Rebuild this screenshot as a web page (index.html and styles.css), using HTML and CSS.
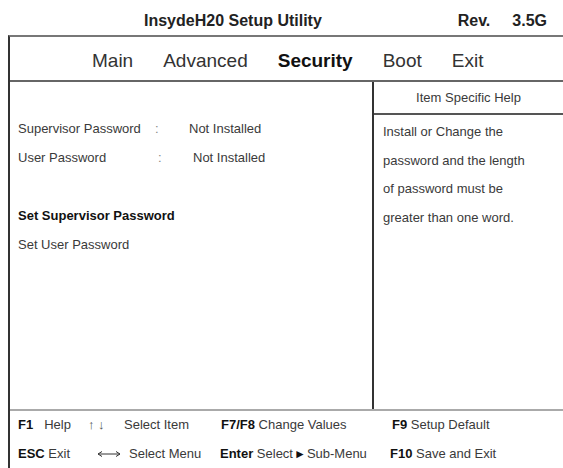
FILE: index.html
```html
<!DOCTYPE html>
<html lang="en">
<head>
    <meta charset="UTF-8">
    <meta name="viewport" content="width=device-width, initial-scale=1.0">
    <title>InsydeH20 Setup Utility</title>
    <link rel="stylesheet" href="styles.css">
</head>
<body>

    <div id="titleBar">
        <div class="title">InsydeH20 Setup Utility</div>
        <div class="rev"><span>Rev.</span><span>3.5G</span></div>
    </div>

    <div id="frame">
        <div class="nav">
            <span>Main</span>
            <span>Advanced</span>
            <span class="active">Security</span>
            <span>Boot</span>
            <span>Exit</span>
        </div>

        <div class="main">
            <div class="settings">
                <div class="row">
                    <span>Supervisor Password</span>
                    <span class="colon">:</span>
                    <span>Not Installed</span>
                </div>
                <div class="row shifted">
                    <span>User Password</span>
                    <span class="colon">:</span>
                    <span>Not Installed</span>
                </div>
                <div class="row blank"></div>
                <div class="item selected">Set Supervisor Password</div>
                <div class="item">Set User Password</div>
            </div>

            <div class="help">
                <div class="help-title">Item Specific Help</div>
                <div class="help-text">
                    <div>Install or Change the</div>
                    <div>password and the length</div>
                    <div>of password must be</div>
                    <div>greater than one word.</div>
                </div>
            </div>
        </div>

        <div class="footer">
            <div class="key"><b>F1</b><span class="pad">Help</span></div>
            <div class="key"><span class="arrows">&#8593; &#8595;</span><span>Select Item</span></div>
            <div class="key"><b>F7/F8</b> Change Values</div>
            <div class="key"><b>F9</b> Setup Default</div>

            <div class="key"><b>ESC</b> Exit</div>
            <div class="key menu">
                <svg class="lr" width="24" height="8" viewBox="0 0 24 8">
                    <path d="M1 4H23M1 4L5 1.5M1 4L5 6.5M23 4L19 1.5M23 4L19 6.5" stroke="#333" stroke-width="1" fill="none"/>
                </svg>
                <span>Select Menu</span>
            </div>
            <div class="key enter"><b>Enter</b> Select<span class="tri">&#9658;</span>Sub-Menu</div>
            <div class="key f10"><b>F10</b> Save and Exit</div>
        </div>
    </div>

</body>
</html>
```

FILE: styles.css
```css
body {
    font-family: 'Liberation Sans', Arial, sans-serif;
    background-color: #fff;
    color: #3a3a3a;
    margin: 0;
    padding: 0;
    width: 563px;
    height: 468px;
    overflow: hidden;
}
#titleBar {
    display: flex;
    align-items: center;
    height: 35px;
    padding-top: 6px;
    box-sizing: border-box;
    font-size: 16px;
    font-weight: bold;
    color: #222;
}
.title {
    margin-left: 144px;
}
.rev {
    margin-left: auto;
    margin-right: 16px;
    display: flex;
    gap: 22px;
}
#frame {
    margin-left: 8px;
    border-left: 2px solid #333;
    border-top: 2px solid #777;
    height: 433px;
}
.nav {
    display: flex;
    align-items: center;
    gap: 30px;
    height: 45px;
    padding-left: 82px;
    padding-top: 4px;
    box-sizing: border-box;
    border-bottom: 2px solid #666;
    font-size: 19px;
    color: #333;
}
.nav .active {
    font-weight: bold;
    color: #111;
}
.main {
    display: flex;
    height: 327px;
}
.settings {
    width: 362px;
    padding: 32px 0 0 8px;
    box-sizing: border-box;
    font-size: 13px;
    line-height: 29px;
}
.row {
    display: grid;
    grid-template-columns: 137px 34px auto;
    height: 29px;
}
.row.shifted {
    grid-template-columns: 140px 35px auto;
}
.colon {
    color: #888;
}
.item.selected {
    font-weight: bold;
    color: #111;
}
.help {
    flex: 1;
    border-left: 2px solid #333;
    font-size: 13px;
}
.help-title {
    height: 31px;
    line-height: 32px;
    text-align: center;
    border-bottom: 2px solid #555;
}
.help-text {
    padding: 3px 0 0 9px;
    line-height: 28.5px;
}
.footer {
    display: grid;
    grid-template-columns: 70px 133px 171px auto;
    grid-template-rows: 22px 22px;
    row-gap: 7px;
    padding: 3px 0 0 8px;
    border-top: 2px solid #aaa;
    font-size: 13px;
    line-height: 22px;
}
.footer b {
    color: #111;
}
.pad {
    margin-left: 11px;
}
.arrows {
    display: inline-block;
    width: 36px;
    font-size: 13px;
    color: #555;
}
.menu {
    display: flex;
    align-items: center;
    padding-left: 9px;
}
.lr {
    margin-right: 8px;
}
.enter {
    margin-left: -1px;
}
.tri {
    font-size: 12px;
    color: #111;
    margin: 0 1px;
}
.f10 {
    margin-left: -2px;
}
```
